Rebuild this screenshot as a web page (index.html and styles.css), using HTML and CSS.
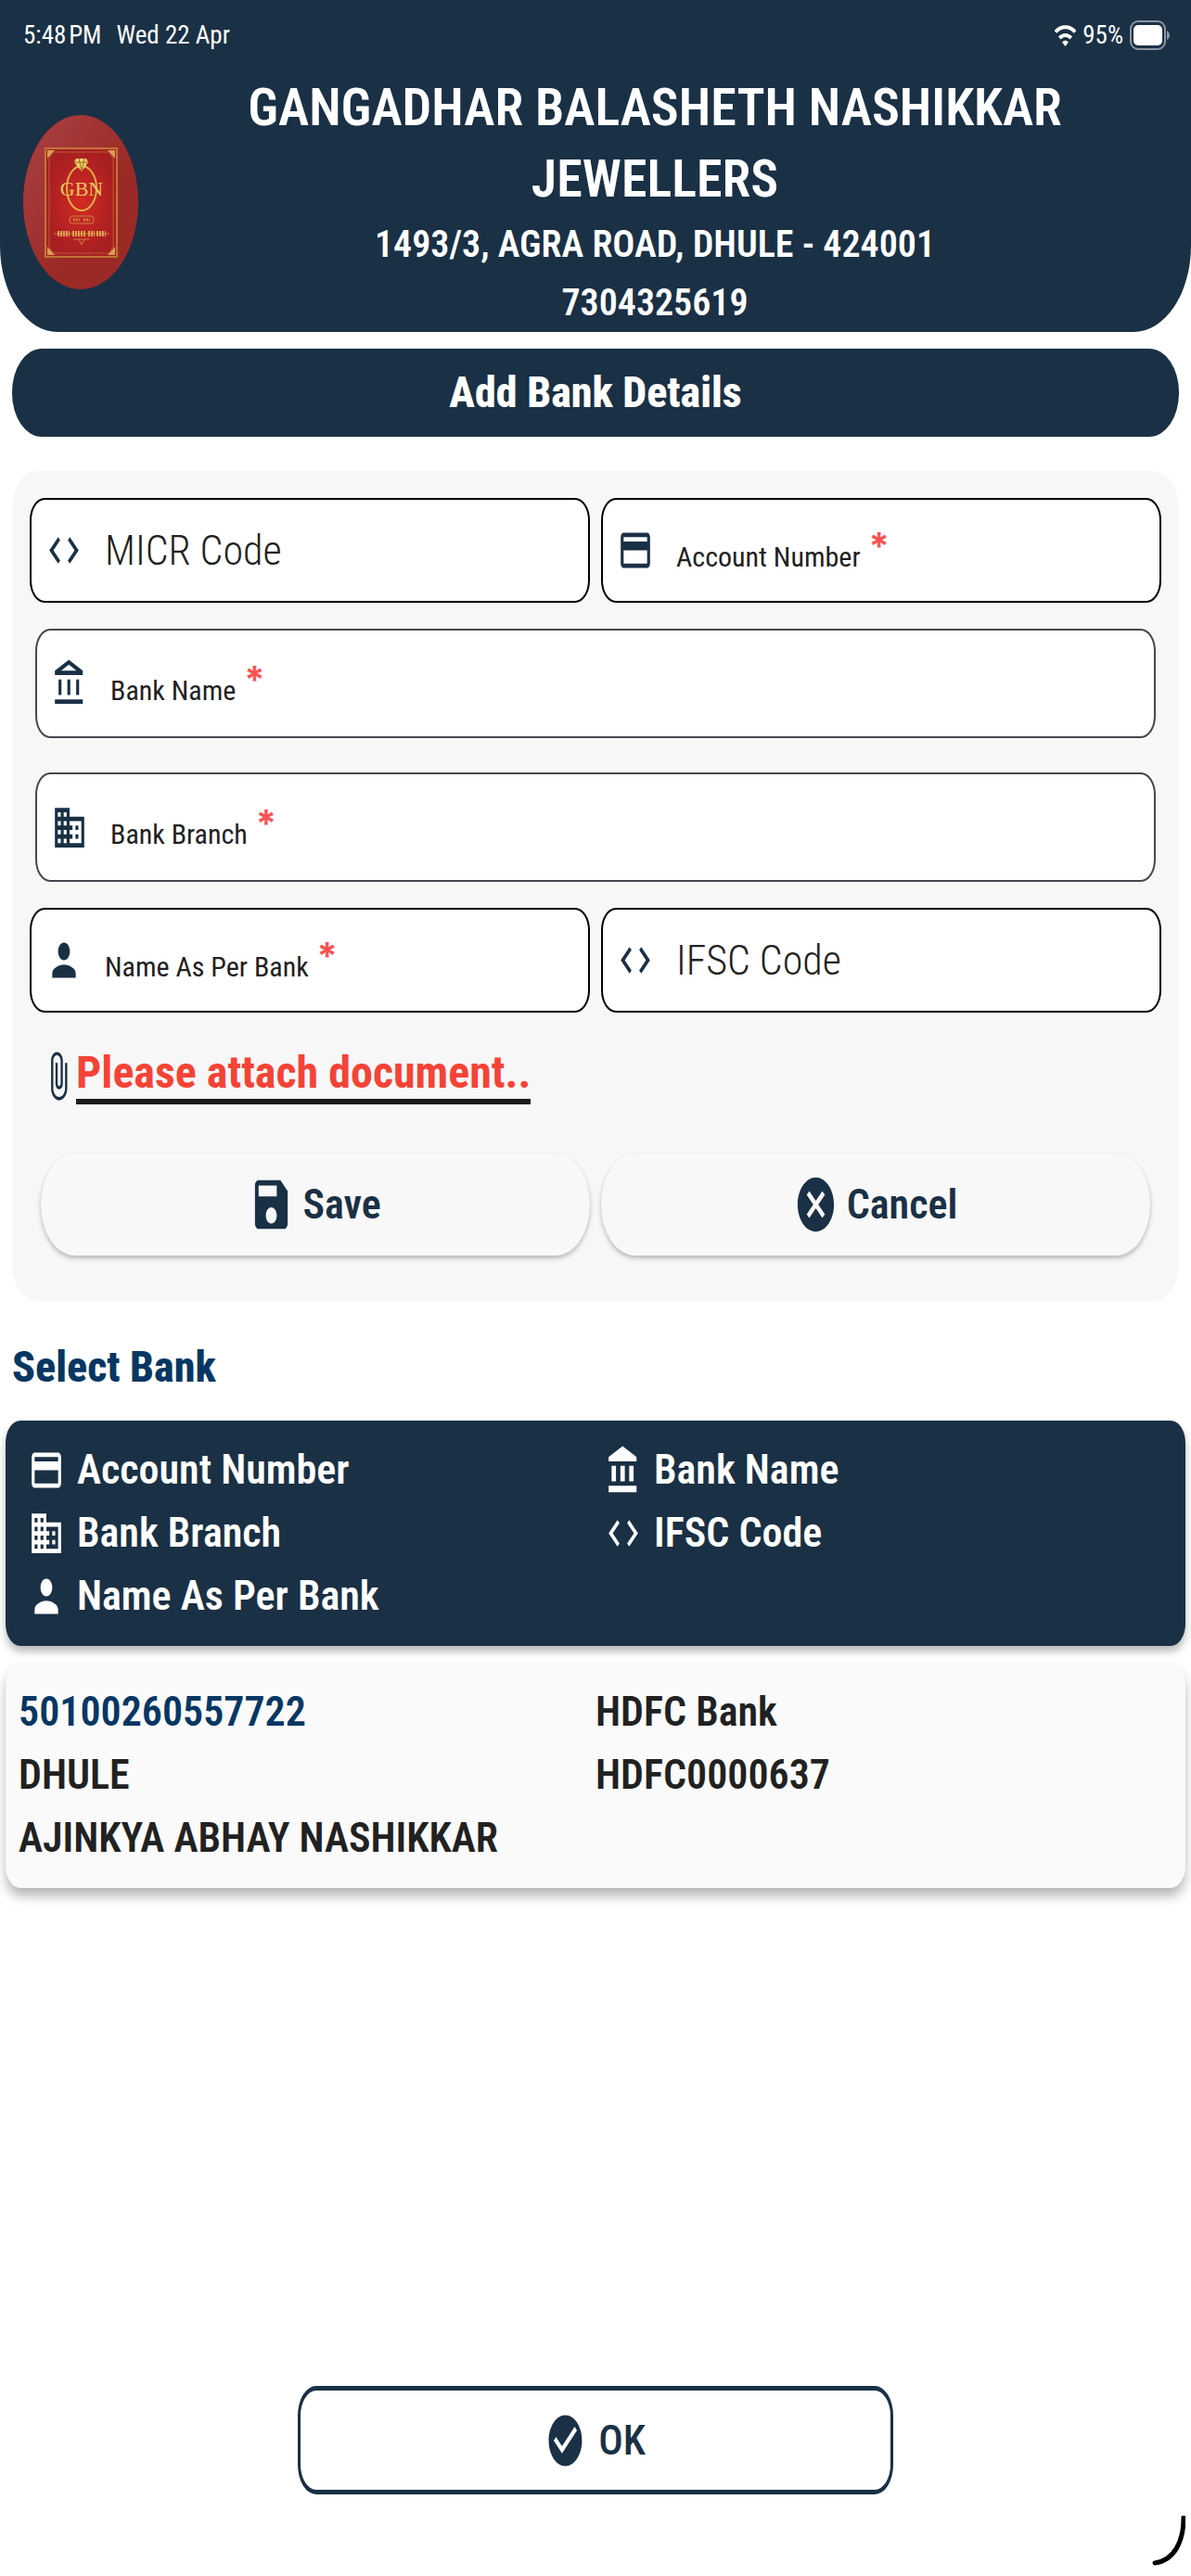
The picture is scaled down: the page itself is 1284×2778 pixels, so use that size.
FILE: index.html
```html
<!DOCTYPE html>
<html lang="en">
<head>
    <meta charset="UTF-8">
    <meta name="viewport" content="width=device-width, initial-scale=1.0">
    <title>Add Bank Details</title>
    <link rel="stylesheet" href="styles.css">
</head>
<body>
    <!-- icon shapes shared by the form and the list -->
    <svg class="sprite" aria-hidden="true">
        <symbol id="icon-code" viewBox="0 0 24 24" preserveAspectRatio="none"><path d="M9.4 16.6L4.8 12l4.6-4.6L8 6l-6 6 6 6 1.4-1.4zm5.2 0l4.6-4.6-4.6-4.6L16 6l6 6-6 6-1.4-1.4z"/></symbol>
        <symbol id="icon-card" viewBox="0 0 24 24" preserveAspectRatio="none"><path d="M20 4H4c-1.11 0-1.99.89-1.99 2L2 18c0 1.11.89 2 2 2h16c1.11 0 2-.89 2-2V6c0-1.11-.89-2-2-2zm0 14H4v-6h16v6zm0-10H4V6h16v2z"/></symbol>
        <symbol id="icon-bank-outline" viewBox="0 0 24 24" preserveAspectRatio="none"><path d="M6.5 10h-2v7h2v-7zm6 0h-2v7h2v-7zm8.500 9H2v2h19v-2zm-2.500-9h-2v7h2v-7zm-7-6.740L16.710 6H6.290l5.210-2.740m0-2.260L2 6v2h19V6l-9.500-5z"/></symbol>
        <symbol id="icon-bank" viewBox="0 0 24 24" preserveAspectRatio="none"><path d="M4 10v7h3v-7H4zm6 0v7h3v-7h-3zM2 22h19v-3H2v3zm14-12v7h3v-7h-3zm-4.500-9L2 6v2h19V6l-9.500-5z"/></symbol>
        <symbol id="icon-branch" viewBox="0 0 24 24" preserveAspectRatio="none"><path d="M12 7V3H2v18h20V7H12zM6 19H4v-2h2v2zm0-4H4v-2h2v2zm0-4H4V9h2v2zm0-4H4V5h2v2zm4 12H8v-2h2v2zm0-4H8v-2h2v2zm0-4H8V9h2v2zm0-4H8V5h2v2zm10 12h-8v-2h2v-2h-2v-2h2v-2h-2V9h8v10zm-2-8h-2v2h2v-2zm0 4h-2v2h2v-2z"/></symbol>
        <symbol id="icon-person" viewBox="0 0 24 24" preserveAspectRatio="none"><path d="M12 12c2.210 0 4-1.790 4-4s-1.790-4-4-4-4 1.790-4 4 1.790 4 4 4zm0 2c-2.670 0-8 1.340-8 4v2h16v-2c0-2.660-5.330-4-8-4z"/></symbol>
        <symbol id="icon-clip" viewBox="0 0 24 24" preserveAspectRatio="none"><path d="M16.500 6v11.500c0 2.210-1.790 4-4 4s-4-1.790-4-4V5c0-1.380 1.120-2.500 2.500-2.500s2.500 1.120 2.500 2.500v10.500c0 .55-.45 1-1 1s-1-.45-1-1V6H10v9.500c0 1.380 1.120 2.500 2.500 2.500s2.500-1.120 2.500-2.500V5c0-2.210-1.790-4-4-4S7 2.790 7 5v12.500c0 3.040 2.460 5.500 5.500 5.500s5.500-2.460 5.500-5.500V6h-1.500z"/></symbol>
        <symbol id="icon-save" viewBox="0 0 24 24" preserveAspectRatio="none"><path d="M17 3H5c-1.110 0-2 .9-2 2v14c0 1.100.89 2 2 2h14c1.100 0 2-.9 2-2V7l-4-4zm-5 16c-1.660 0-3-1.340-3-3s1.340-3 3-3 3 1.340 3 3-1.340 3-3 3zm3-10H5V5h10v4z"/></symbol>
        <symbol id="icon-cancel" viewBox="0 0 24 24" preserveAspectRatio="none"><path d="M12 2C6.470 2 2 6.470 2 12s4.470 10 10 10 10-4.470 10-10S17.530 2 12 2zm5 13.590L15.590 17 12 13.410 8.410 17 7 15.590 10.590 12 7 8.410 8.410 7 12 10.590 15.590 7 17 8.410 13.410 12 17 15.590z"/></symbol>
        <symbol id="icon-check" viewBox="0 0 24 24" preserveAspectRatio="none"><path d="M12 2C6.480 2 2 6.480 2 12s4.480 10 10 10 10-4.480 10-10S17.520 2 12 2zm-2 15l-5-5 1.410-1.410L10 14.170l7.590-7.590L19 8l-9 9z"/></symbol>
    </svg>

    <header class="header">
        <div class="status">
            <span>5:48&#8202;PM</span>
            <span>Wed 22 Apr</span>
            <div class="status-right">
                <svg class="wifi" viewBox="0 0 24 24" preserveAspectRatio="none" fill="none" stroke="#fff" stroke-width="4">
                    <path d="M1 8.500c6-7 16-7 22 0M5.500 15c4-4 9-4 13 0"/>
                    <path d="M12 24l-3.500-4.500c2-2.200 5-2.200 7 0z" fill="#fff" stroke="none"/>
                </svg>
                <span>95%</span>
                <svg class="battery" viewBox="0 0 44 32">
                    <rect x="1" y="1" width="37" height="30" rx="8" fill="none" stroke="#8b969f" stroke-width="2"/>
                    <rect x="4" y="5" width="31" height="22" rx="5" fill="#fff"/>
                    <path d="M40 11c4 2 4 8 0 10z" fill="#8b969f"/>
                </svg>
            </div>
        </div>
        <div class="shop">
            <svg class="logo" viewBox="0 0 125 189" role="img" aria-label="GBN logo">
                <defs>
                    <linearGradient id="disc" x1="0" y1="0" x2="1" y2="1">
                        <stop offset="0.200" stop-color="#a63a3a"/>
                        <stop offset="0.600" stop-color="#9b2a27"/>
                    </linearGradient>
                    <radialGradient id="plate">
                        <stop offset="0" stop-color="#d22a22"/>
                        <stop offset="1" stop-color="#a81f22"/>
                    </radialGradient>
                </defs>
                <ellipse cx="62" cy="94" rx="62" ry="94" fill="url(#disc)"/>
                <rect x="24" y="36" width="77" height="117" fill="url(#plate)" stroke="#c4733a" stroke-width="2"/>
                <path d="M32 40h61l4 7v95l-4 7H32l-4-7V47z" fill="none" stroke="#b85a32"/>
                <path d="M26 47V38h8zM91 38h8v9zM26 142v9h8zM99 142v9h-8z" fill="#d89b55"/>
                <ellipse cx="63" cy="79" rx="16" ry="24" fill="none" stroke="#e3b044" stroke-width="2"/>
                <path d="M57 47h11l2 4-7 10-8-10z" fill="#f0cf6a"/>
                <path d="M55 51h15M60 47l3 13 3-13" fill="none" stroke="#a06a20"/>
                <text x="63" y="87" class="logo-text" text-anchor="middle">GBN</text>
                <rect x="50" y="109" width="26" height="8" rx="3" fill="none" stroke="#c98040"/>
                <path d="M54 113h7M65 113h7" stroke="#c98040" stroke-width="3" stroke-dasharray="2 1"/>
                <path d="M33 128h60" stroke="#c98040"/>
                <path d="M37 128h13M53 128h15M70 128h7M79 128h10" stroke="#e0a050" stroke-width="6" stroke-dasharray="2 1"/>
                <path d="M54 134h17M60 134l3 6 3-6" fill="none" stroke="#c98040"/>
            </svg>
            <div class="shop-text">
                <h1>GANGADHAR BALASHETH NASHIKKAR JEWELLERS</h1>
                <p>1493/3, AGRA ROAD, DHULE - 424001</p>
                <p>7304325619</p>
            </div>
        </div>
    </header>

    <main>
        <h2 class="page-title">Add Bank Details</h2>

        <form class="bank-form">
            <div class="row">
                <div class="field">
                    <svg class="icon"><use href="#icon-code"/></svg>
                    <label for="micr" class="big">MICR Code</label>
                    <input type="text" id="micr">
                </div>
                <div class="field">
                    <svg class="icon"><use href="#icon-card"/></svg>
                    <label for="account">Account Number <span class="star">*</span></label>
                    <input type="text" id="account" required>
                </div>
            </div>
            <div class="row wide">
                <div class="field">
                    <svg class="icon"><use href="#icon-bank-outline"/></svg>
                    <label for="bank">Bank Name <span class="star">*</span></label>
                    <input type="text" id="bank" required>
                </div>
                <div class="field">
                    <svg class="icon"><use href="#icon-branch"/></svg>
                    <label for="branch">Bank Branch <span class="star">*</span></label>
                    <input type="text" id="branch" required>
                </div>
            </div>
            <div class="row">
                <div class="field">
                    <svg class="icon"><use href="#icon-person"/></svg>
                    <label for="holder">Name As Per Bank <span class="star">*</span></label>
                    <input type="text" id="holder" required>
                </div>
                <div class="field">
                    <svg class="icon"><use href="#icon-code"/></svg>
                    <label for="ifsc" class="big">IFSC Code</label>
                    <input type="text" id="ifsc">
                </div>
            </div>
            <div class="attach">
                <svg class="icon"><use href="#icon-clip"/></svg>
                <a href="#">Please attach document..</a>
            </div>
            <div class="row actions">
                <button type="button" class="pill"><svg class="icon"><use href="#icon-save"/></svg>Save</button>
                <button type="button" class="pill"><svg class="icon"><use href="#icon-cancel"/></svg>Cancel</button>
            </div>
        </form>

        <h2 class="list-title">Select Bank</h2>
        <section class="bank-card bank-head">
            <span><svg class="icon"><use href="#icon-card"/></svg>Account Number</span>
            <span><svg class="icon"><use href="#icon-bank"/></svg>Bank Name</span>
            <span><svg class="icon"><use href="#icon-branch"/></svg>Bank Branch</span>
            <span><svg class="icon"><use href="#icon-code"/></svg>IFSC Code</span>
            <span><svg class="icon"><use href="#icon-person"/></svg>Name As Per Bank</span>
        </section>
        <section class="bank-card bank-item">
            <span class="number">50100260557722</span>
            <span>HDFC Bank</span>
            <span>DHULE</span>
            <span>HDFC0000637</span>
            <span>AJINKYA ABHAY NASHIKKAR</span>
        </section>
    </main>

    <footer class="footer">
        <button type="button" class="ok"><svg class="icon"><use href="#icon-check"/></svg>OK</button>
    </footer>
    <svg class="corner" viewBox="0 0 36 56" aria-hidden="true"><path d="M34 2C34 28 24 48 3 51" fill="none" stroke="#000" stroke-width="5" stroke-linecap="round"/></svg>
</body>
</html>
```
FILE: styles.css
```css
* {
    box-sizing: border-box;
}
body {
    margin: 0;
    min-height: 100vh;
    display: flex;
    flex-direction: column;
    font-family: "Roboto Condensed", "Liberation Sans Narrow", Roboto, sans-serif;
    font-size: 44px;
    color: #212121;
    background: white;
}
h1, h2, p {
    margin: 0;
}
.sprite {
    position: absolute;
    width: 0;
    height: 0;
}
.icon {
    width: 38px;
    height: 57px;
    flex: none;
    fill: currentColor;
}

/* header */
.header {
    background: #1a3045;
    color: white;
    padding: 20px 22px 0 25px;
    border-radius: 0 0 62px 62px / 0 0 93px 93px;
}
.status {
    display: flex;
    align-items: center;
    gap: 16px;
    height: 36px;
    font-size: 27px;
}
.status-right {
    display: flex;
    align-items: center;
    gap: 7px;
    margin-left: auto;
}
.wifi {
    width: 23px;
    height: 24px;
}
.battery {
    width: 44px;
    height: 32px;
}
.shop {
    display: flex;
    align-items: center;
    padding-top: 22px;
}
.logo {
    width: 125px;
    height: 189px;
    flex: none;
}
.logo-text {
    font-family: "Liberation Serif", serif;
    font-size: 22px;
    fill: #ecc660;
}
.shop-text {
    flex: 1;
    padding: 0 80px;
    text-align: center;
    font-weight: 600;
}
.shop-text h1 {
    font-size: 56px;
    font-weight: 600;
    line-height: 77px;
}
.shop-text p {
    font-size: 40px;
    line-height: 63px;
}

/* form */
.page-title {
    margin: 18px 13px 37px;
    border-radius: 32px / 47px;
    background: #1a3045;
    color: white;
    font-size: 46px;
    font-weight: 800;
    line-height: 95px;
    text-align: center;
}
.bank-form {
    margin: 0 13px;
    padding: 29px 19px 49px;
    border-radius: 27px / 40px;
    background: #f7f7f7;
}
.row {
    display: grid;
    grid-template-columns: repeat(2, minmax(0, 1fr));
    gap: 12px;
}
.field {
    display: flex;
    align-items: center;
    height: 113px;
    padding: 0 16px;
    border: 2px solid black;
    border-radius: 16px / 24px;
    background: white;
}
.field .icon {
    color: #1a3045;
}
.field label {
    margin-left: 25px;
    padding-top: 14px;
    font-size: 30px;
    white-space: nowrap;
}
.field label.big {
    padding-top: 0;
    font-size: 44px;
    font-weight: 350;
}
.field input {
    flex: 1;
    min-width: 0;
    border: none;
    outline: none;
    background: none;
    font: inherit;
}
.star {
    margin-left: 2px;
    color: #ff5252;
    font-family: Inter, sans-serif;
    font-size: 40px;
    font-weight: bold;
    line-height: 0;
    vertical-align: 8px;
}
.wide {
    grid-template-columns: minmax(0, 1fr);
    gap: 37px;
    padding: 28px 6px;
}
.wide .field {
    height: 118px;
    border-color: #4a4450;
}
.attach {
    display: flex;
    align-items: center;
    margin-top: 37px;
    padding-left: 12px;
    color: #1a3045;
}
.attach a {
    color: #f44336;
    font-size: 48px;
    font-weight: bold;
    line-height: 56px;
    text-decoration: none;
    border-bottom: 6px solid #1c1b1f;
}
.actions {
    padding: 53px 12px 0;
}
.pill {
    display: flex;
    align-items: center;
    justify-content: center;
    gap: 10px;
    height: 110px;
    border: none;
    border-radius: 37px / 55px;
    background: #f8f8f8;
    box-shadow: 0 3px 5px rgba(0, 0, 0, 0.25);
    color: #1a3045;
    font: inherit;
    font-weight: 600;
}
.pill .icon {
    width: 47px;
    height: 70px;
}

/* saved banks */
.list-title {
    margin: 39px 13px 25px;
    color: #063763;
    font-size: 46px;
    font-weight: 800;
    line-height: 65px;
}
.bank-card {
    display: grid;
    grid-template-columns: repeat(2, minmax(0, 1fr));
    margin: 0 6px 18px;
    padding: 19px 14px 20px;
    border-radius: 16px / 24px;
    font-weight: 600;
    line-height: 68px;
    box-shadow: 0 6px 8px rgba(0, 0, 0, 0.28);
}
.bank-card span {
    display: flex;
    align-items: center;
}
.bank-head {
    background: #1a3045;
    color: white;
}
.bank-head .icon {
    margin: 0 14px 0 11px;
}
.bank-item {
    background: #fafafa;
    box-shadow: 0 9px 12px rgba(0, 0, 0, 0.28);
}
.bank-item .number {
    color: #063763;
}

.footer {
    margin-top: auto;
    padding-bottom: 88px;
}
.ok {
    display: flex;
    align-items: center;
    justify-content: center;
    gap: 14px;
    width: 50%;
    height: 117px;
    margin: 0 auto;
    border: 3px solid #1a3045;
    border-width: 5px 3px;
    border-radius: 20px / 32px;
    background: white;
    color: #1a3045;
    font: inherit;
    font-weight: 500;
}
.ok .icon {
    width: 43px;
    height: 66px;
}
/* resize handle over the page corner */
.corner {
    position: absolute;
    right: 6px;
    bottom: 9px;
    width: 36px;
    height: 56px;
}
```
